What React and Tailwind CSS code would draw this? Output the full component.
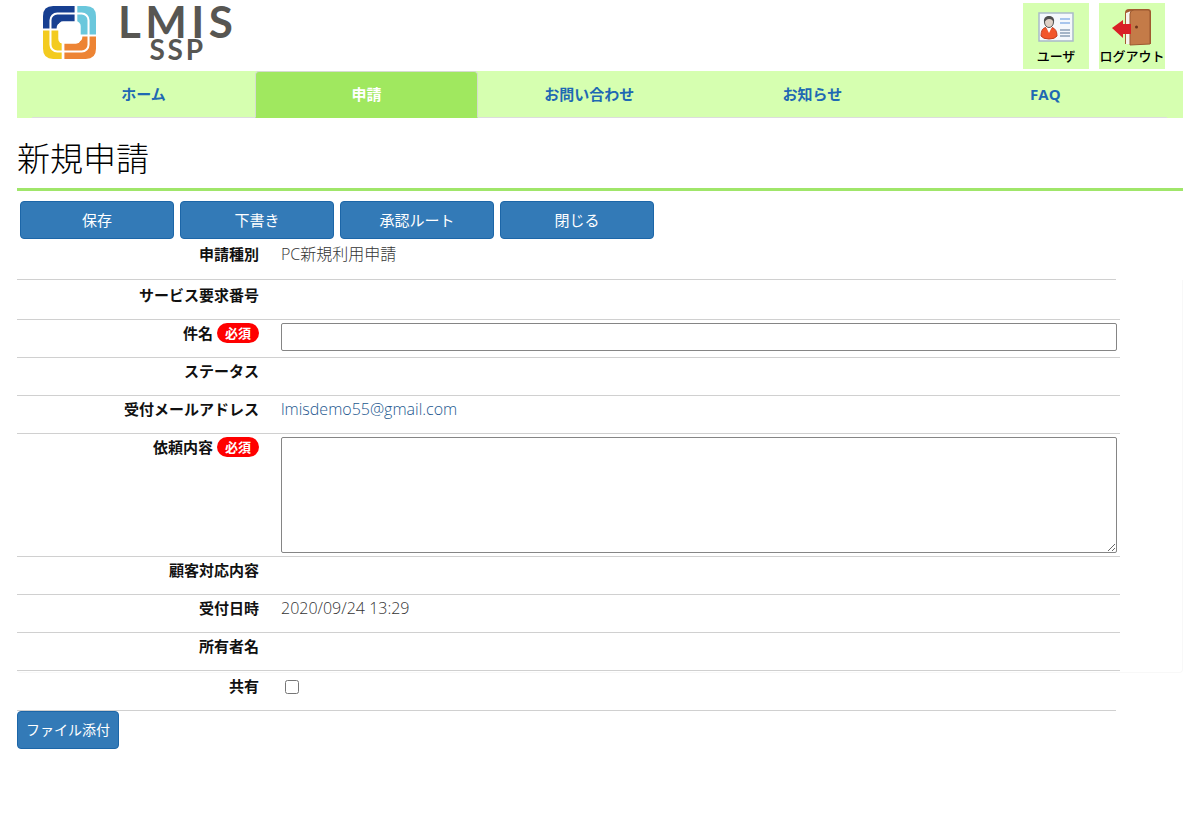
import React, { useState } from "react";

const TABS = ["ホーム", "申請", "お問い合わせ", "お知らせ", "FAQ"];
const ACTIONS = ["保存", "下書き", "承認ルート", "閉じる"];

function LogoMark() {
  return (
    <svg viewBox="0 0 156 156" className="h-[53px] w-[53px]">
      <path d="M0 66V30Q0 0 30 0H93V50H56Q40 50 40 66Z" fill="#173f91" />
      <path d="M101 0H126Q156 0 156 30V84H101Z" fill="#6ac7dc" />
      <path d="M156 90V126Q156 156 126 156H63V106H100Q116 106 116 90Z" fill="#ed8434" />
      <path d="M0 72H55V156H30Q0 156 0 126Z" fill="#f3cb20" />
      {/* white seam between the inner and outer bands, and the open centre */}
      <rect x="22" y="22" width="112" height="112" rx="20" fill="none" stroke="#fff" strokeWidth="6" />
      <rect x="45" y="45" width="66" height="66" rx="14" fill="#fff" />
    </svg>
  );
}

function UserIcon() {
  return (
    <svg viewBox="0 0 36 30" className="h-[30px] w-9">
      <rect x="1" y="1" width="34" height="28" fill="#f4f8fc" stroke="#a9bac9" strokeWidth="1.5" />
      <path d="M3 24Q3 16 8 15.500L11 19L14 15.500Q19 17 19 24Q17 27 11 27Q5 27 3 24Z" fill="#f2562b" stroke="#c33d1e" />
      <path d="M8 15L11 21L14 15Z" fill="#fff" />
      <ellipse cx="11" cy="10" rx="4.500" ry="5.500" fill="#ddd0c6" stroke="#555" />
      <path d="M6 11Q5 4 11 4Q17 4 16 11Q15 7 11 7Q8 7 6 11Z" fill="#4e4e4e" />
      <path d="M22 7H32M22 11H32" stroke="#8db4e8" strokeWidth="1.5" />
      <path d="M22 18H32M22 21H32M22 24H32" stroke="#8a9fb5" strokeWidth="1.5" />
    </svg>
  );
}

function LogoutIcon() {
  return (
    <svg viewBox="0 0 40 38" className="h-[38px] w-10">
      <path d="M13 36V5Q13 1 17 1H36Q39 1 39 4V36Z" fill="#a45b2f" />
      <path d="M14 5L19 3V36H14Z" fill="#f6f4ee" />
      <path d="M18 6Q18 2 22 2H36Q38 2 38 4V36L18 37Z" fill="#c47b48" stroke="#9c5930" />
      <circle cx="24.500" cy="19" r="1.500" fill="#6c3419" />
      <path d="M0 20L11 12V16H19V26H11V30Z" fill="#d91f26" />
    </svg>
  );
}

function HeaderButton({ icon, label }) {
  return (
    <button className="flex h-[66px] w-[66px] flex-col items-center bg-[#d6ffb0] pt-1 text-[13px] leading-5 font-medium whitespace-nowrap text-black">
      <span className="flex h-[39px] items-center">{icon}</span>
      {label}
    </button>
  );
}

function Required() {
  return (
    <span className="rounded-full bg-[#ff0000] px-2 text-[13px] leading-5 font-bold text-white">必須</span>
  );
}

function Row({ label, htmlFor, required, className = "h-[38px]", children }) {
  return (
    <div className={"flex gap-[22px] border-b border-[#d0d0d0] " + className}>
      <div className="flex w-[242px] shrink-0 items-start justify-end gap-1 pt-[3px] leading-5 font-bold text-[#111]">
        {htmlFor ? <label htmlFor={htmlFor}>{label}</label> : <span>{label}</span>}
        {required && <Required />}
      </div>
      <div className="min-w-0 flex-1 pt-[3px] pr-[3px] text-base leading-5 font-light">{children}</div>
    </div>
  );
}

export default function App() {
  const [subject, setSubject] = useState("");
  const [body, setBody] = useState("");
  const [shared, setShared] = useState(false);

  return (
    <div className="min-h-screen bg-white px-[17px] font-['Open_Sans','Noto_Sans_CJK_JP',sans-serif] text-[15px] text-[#333]">
      <header className="flex h-[71px] justify-between pr-[18px] pl-[26px]">
        <div className="flex items-start gap-[22px] pt-[6px]">
          <LogoMark />
          <div className="flex flex-col items-center font-['Lato',sans-serif] font-bold text-[#575652]">
            <span className="text-[44px] leading-[31px] tracking-widest">LMIS</span>
            <span className="text-[28px] leading-[25px] tracking-widest">SSP</span>
          </div>
        </div>
        <div className="flex gap-[10px] pt-[3px]">
          <HeaderButton icon={<UserIcon />} label="ユーザ" />
          <HeaderButton icon={<LogoutIcon />} label="ログアウト" />
        </div>
      </header>

      <nav className="grid h-[47px] grid-cols-[11fr_11fr_11fr_11fr_12fr] bg-[#d6ffb0] pr-4 pl-[15px]">
        {TABS.map((tab) => (
          <a
            key={tab}
            href="#"
            className={
              "flex items-center justify-center font-bold " +
              (tab === "申請"
                ? "rounded-t border border-[#d5dccf] border-b-[#a0e85f] bg-[#a0e85f] text-white"
                : "border-b border-[#dddddd] text-[#1f69b3]")
            }
          >
            {tab}
          </a>
        ))}
      </nav>

      <h1 className="mt-[18px] border-b-[3px] border-[#a0e66a] pb-[6px] text-[33px] leading-[46px] font-light text-black">新規申請</h1>

      <div className="flex gap-[6px] pt-[10px] pl-[3px]">
        {ACTIONS.map((a) => (
          <button key={a} className="h-[38px] w-[154px] rounded border border-[#1c66a8] bg-[#337ab7] text-white">
            {a}
          </button>
        ))}
      </div>

      <form onSubmit={(e) => e.preventDefault()}>
        <Row label="申請種別" className="mr-[67px] h-[41px] pt-[2px]">PC新規利用申請</Row>
        <div className="rounded-b border-r border-b border-[#f8f8f8] pr-[62px] pb-px">
          <Row label="サービス要求番号" className="h-[40px] pt-[2px]" />
          <Row label="件名" htmlFor="subject" required>
            <input
              id="subject"
              type="text"
              value={subject}
              onChange={(e) => setSubject(e.target.value)}
              className="block h-7 w-full rounded-[2px] border border-[#858585] px-1"
            />
          </Row>
          <Row label="ステータス" />
          <Row label="受付メールアドレス">
            <a href="mailto:lmisdemo55@gmail.com" className="text-[#23588f]">lmisdemo55@gmail.com</a>
          </Row>
          <Row label="依頼内容" htmlFor="body" required className="h-[123px]">
            <textarea
              id="body"
              value={body}
              onChange={(e) => setBody(e.target.value)}
              className="block h-[116px] w-full rounded-[2px] border border-[#858585] px-1"
            />
          </Row>
          <Row label="顧客対応内容" />
          <Row label="受付日時">2020/09/24 13:29</Row>
          <Row label="所有者名" />
        </div>
        <Row label="共有" htmlFor="shared" className="mr-[67px] h-[38px]">
          <input
            id="shared"
            type="checkbox"
            checked={shared}
            onChange={(e) => setShared(e.target.checked)}
            className="mt-1 ml-1 block h-[14px] w-[14px]"
          />
        </Row>
      </form>
      <button className="h-[38px] rounded border border-[#1c66a8] bg-[#337ab7] px-2 text-sm text-white">ファイル添付</button>
    </div>
  );
}
